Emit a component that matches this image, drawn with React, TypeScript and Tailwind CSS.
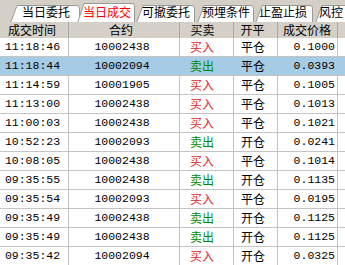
const tabs = [
  { label: "当日委托", box: "ml-[10px] w-[70px] pl-[12px] z-0", active: false },
  { label: "当日成交", box: "ml-[-3px] w-[58px] pl-[6px] z-10", active: true },
  { label: "可撤委托", box: "ml-[1px] w-[59px] pl-[6px] z-0", active: false },
  { label: "预埋条件", box: "ml-[2px] w-[57px] pl-[5px] z-0", active: false },
  { label: "止盈止损", box: "ml-[1px] w-[58px] pl-[4px] z-0", active: false },
  { label: "风控", box: "ml-[2px] w-[58px] pl-[4px] z-0", active: false },
];

const widths: Record<string, number> = {
  "ml-[10px] w-[70px] pl-[12px] z-0": 70,
  "ml-[-3px] w-[58px] pl-[6px] z-10": 58,
  "ml-[1px] w-[59px] pl-[6px] z-0": 59,
  "ml-[2px] w-[57px] pl-[5px] z-0": 57,
  "ml-[1px] w-[58px] pl-[4px] z-0": 58,
  "ml-[2px] w-[58px] pl-[4px] z-0": 58,
};

type Trade = {
  time: string;
  code: string;
  side: "买入" | "卖出";
  open: "开仓" | "平仓";
  price: string;
};

const trades: Trade[] = [
  { time: "11:18:46", code: "10002438", side: "买入", open: "平仓", price: "0.1000" },
  { time: "11:18:44", code: "10002094", side: "卖出", open: "平仓", price: "0.0393" },
  { time: "11:14:59", code: "10001905", side: "买入", open: "平仓", price: "0.1005" },
  { time: "11:13:00", code: "10002438", side: "买入", open: "平仓", price: "0.1013" },
  { time: "11:00:03", code: "10002438", side: "买入", open: "平仓", price: "0.1021" },
  { time: "10:52:23", code: "10002093", side: "卖出", open: "开仓", price: "0.0241" },
  { time: "10:08:05", code: "10002438", side: "买入", open: "平仓", price: "0.1014" },
  { time: "09:35:55", code: "10002438", side: "卖出", open: "开仓", price: "0.1135" },
  { time: "09:35:54", code: "10002093", side: "买入", open: "平仓", price: "0.0195" },
  { time: "09:35:49", code: "10002438", side: "卖出", open: "开仓", price: "0.1125" },
  { time: "09:35:49", code: "10002438", side: "卖出", open: "开仓", price: "0.1125" },
  { time: "09:35:42", code: "10002094", side: "买入", open: "开仓", price: "0.0325" },
];

const cjk = { fontFamily: '"Noto Sans CJK SC", sans-serif' };
const mono = { fontFamily: '"Liberation Mono", "Noto Sans CJK SC", monospace' };

function Tab({ label, box, active }: { label: string; box: string; active: boolean }) {
  const w = widths[box];
  const t = active ? 3 : 5;
  const d = `M0.5 23 L7 ${t + 0.5} L${w - 3} ${t + 0.5} Q${w - 0.5} ${t + 0.5} ${w - 0.5} ${t + 3} L${w - 0.5} 23`;
  return (
    <div className={`relative h-[22px] shrink-0 ${box}`}>
      <svg className="absolute inset-0" width={w} height={22} aria-hidden>
        <path d={d} fill="#ffffff" stroke="#9a9a9a" strokeWidth={1} />
      </svg>
      <span
        className={`relative block pt-[4px] text-[12px] leading-[16px] whitespace-nowrap ${
          active ? "text-[#ff0000]" : "text-black"
        }`}
        style={cjk}
      >
        {label}
      </span>
    </div>
  );
}

export default function App() {
  return (
    <div className="w-[345px] h-[265px] overflow-hidden bg-white select-none">
      {/* Tab strip */}
      <div className="flex h-[22px] bg-[#d4d0c8] overflow-hidden">
        {tabs.map((tab) => (
          <Tab key={tab.label} {...tab} />
        ))}
      </div>

      {/* Header */}
      <div className="flex h-[16px] bg-[#d4d0c8] text-[12px] leading-[16px] text-black" style={cjk}>
        <div className="w-[69px] shrink-0 border-r border-[#a8a8a8] text-center pr-[4px]">成交时间</div>
        <div className="w-[111px] shrink-0 border-r border-[#a8a8a8] text-center pr-[6px]">合约</div>
        <div className="w-[54px] shrink-0 border-r border-[#a8a8a8] text-center pr-[8px]">买卖</div>
        <div className="w-[44px] shrink-0 border-r border-[#a8a8a8] text-center pr-[6px]">开平</div>
        <div className="w-[60px] shrink-0 border-r border-[#a8a8a8] text-center pr-[1px]">成交价格</div>
        <div className="flex-1" />
      </div>

      {/* Rows */}
      {trades.map((r, i) => {
        const sel = i === 1;
        const line = sel ? "border-transparent" : "border-[#c4c4c4]";
        return (
          <div
            key={i}
            className={`flex h-[19px] border-b border-[#c4c4c4] leading-[18px] ${
              sel ? "bg-[#a6cbe5]" : "bg-white"
            }`}
          >
            <div className={`w-[69px] shrink-0 border-r ${line} text-center pr-[3px] text-[11.5px] text-black`} style={mono}>
              {r.time}
            </div>
            <div className={`w-[111px] shrink-0 border-r ${line} text-center pr-[4px] text-[11.5px] text-black`} style={mono}>
              {r.code}
            </div>
            <div
              className={`w-[54px] shrink-0 border-r ${line} text-center pr-[9px] text-[12px] ${
                r.side === "买入" ? "text-[#e02828]" : "text-[#008a00]"
              }`}
              style={cjk}
            >
              {r.side}
            </div>
            <div className={`w-[44px] shrink-0 border-r ${line} text-center pr-[5px] text-[12px] text-black`} style={cjk}>
              {r.open}
            </div>
            <div className={`w-[60px] shrink-0 border-r ${line} text-right pr-[2px] text-[11.5px] text-black`} style={mono}>
              {r.price}
            </div>
            <div className="flex-1" />
          </div>
        );
      })}
    </div>
  );
}
